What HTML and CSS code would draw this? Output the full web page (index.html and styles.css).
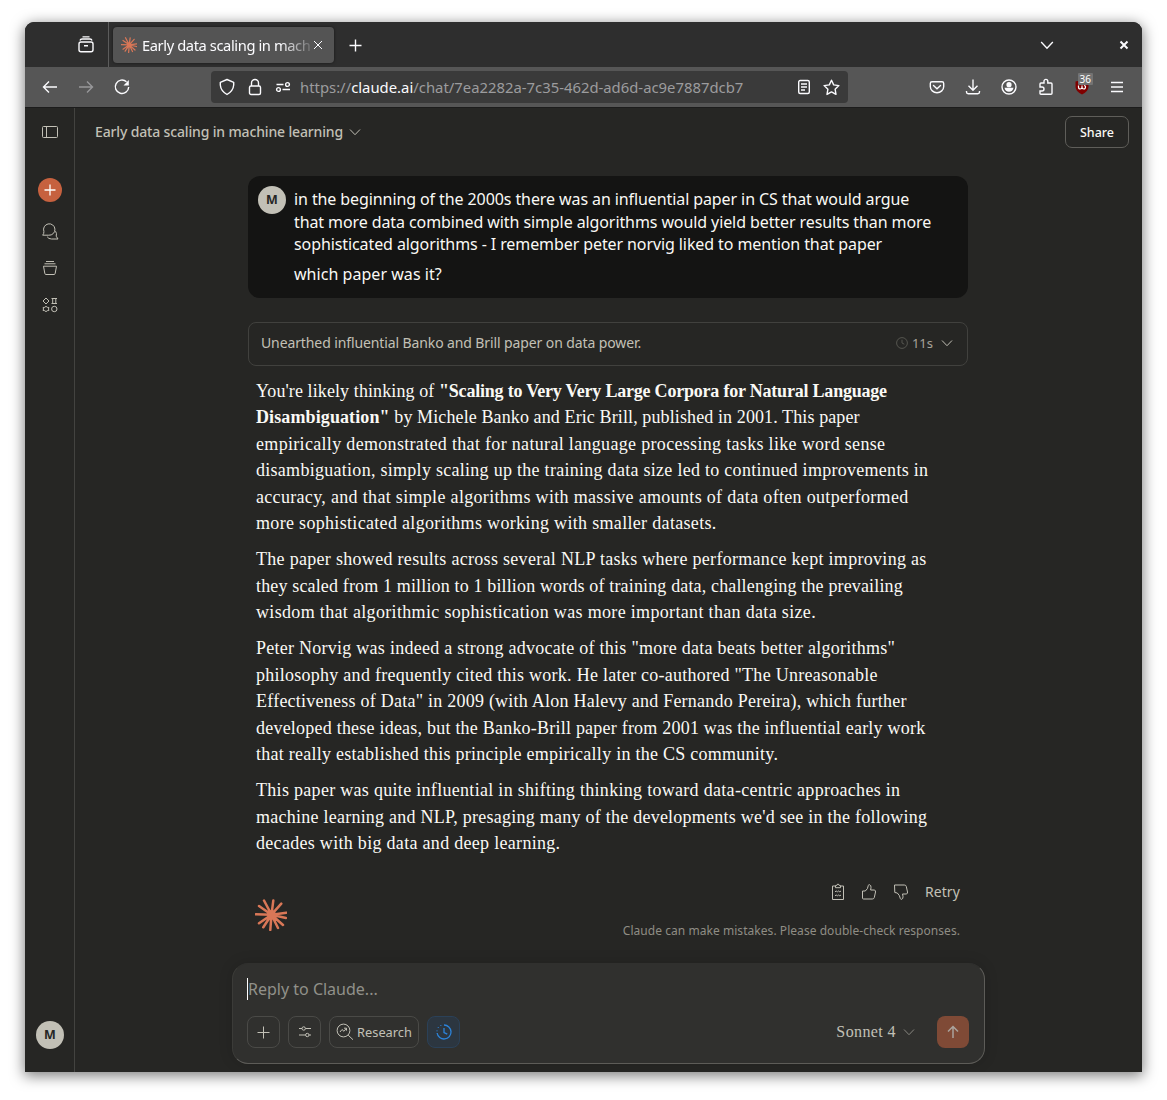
FILE: index.html
```html
<!DOCTYPE html>
<html lang="en">
<head>
<meta charset="utf-8">
<title>Early data scaling in machine learning</title>
<link rel="stylesheet" href="styles.css">
</head>
<body>
<svg class="defs" aria-hidden="true">
  <symbol id="burst" viewBox="0 0 32 32"><path d="M16.5 15.7L9 1.5M16.5 15.7L18.3 1.6M16.5 15.7L26.3 4.6M16.5 15.7L31.3 13.7M16.5 15.7L31 19M16.5 15.7L28 26M16.5 15.7L23 29M16.5 15.7L15.3 31M16.5 15.7L8.3 28.3M16.5 15.7L4 24.3M16.5 15.7L.7 15.3M16.5 15.7L4 7" fill="none" stroke="#d97757" stroke-width="2.5" stroke-linecap="round"/><circle cx="16.5" cy="15.7" r="4.500" fill="#d97757"/></symbol>
  <symbol id="chev" viewBox="0 0 12 12"><path d="M1 3.500L6 8.700l5-5.200"/></symbol>
</svg>
<div class="window">
  <header class="tabs">
    <div class="recent"><svg class="ic" width="18" height="18" viewBox="0 0 18 18"><rect x="2" y="6" width="14" height="9.700" rx="2"/><path d="M3 4.500Q3.500 3 5 3H13Q14.500 3 15 4.500M5.500 .9H12.500M7 9.700H11"/></svg></div>
    <div class="tab">
      <svg width="16" height="16"><use href="#burst"/></svg>
      <span class="tab-title">Early data scaling in mach</span>
      <svg class="ic thin" width="10" height="10" viewBox="0 0 10 10"><path d="M1 1l8 8M9 1L1 9"/></svg>
    </div>
    <svg class="ic plus" width="13" height="13" viewBox="0 0 13 13"><path d="M6.500.5v12M.5 6.500h12"/></svg>
    <svg class="ic tablist" width="14" height="14" viewBox="0 0 12 12"><use href="#chev"/></svg>
    <svg class="ic close" width="10" height="10" viewBox="0 0 10 10"><path d="M1.500 1.500l7 7M8.500 1.500l-7 7"/></svg>
  </header>
  <div class="toolbar">
    <div class="nav">
      <svg class="ic" width="16" height="16" viewBox="0 0 16 16"><path d="M15 8H1.500M7 2.500L1.500 8 7 13.500"/></svg>
      <svg class="ic dim" width="16" height="16" viewBox="0 0 16 16"><path d="M1 8h13.500M9 2.500L14.500 8 9 13.500"/></svg>
      <svg class="ic" width="16" height="16" viewBox="0 0 16 16"><path d="M12.500 2.800A6.700 6.700 0 1 0 14.700 8"/><path d="M14.800 1v5.500H9.500z" fill="#fbfbfe" stroke="none"/></svg>
    </div>
    <div class="url">
      <svg class="ic" width="16" height="18" viewBox="0 0 16 18"><path d="M8 1.500L14.700 4.300V7Q14.200 13 8 16.500 1.800 13 1.300 7V4.300z" stroke-linejoin="round"/></svg>
      <svg class="ic" width="14" height="18" viewBox="0 0 14 18"><rect x="1.500" y="8" width="11" height="8.500" rx="1.500"/><path d="M3.500 8V5A3.500 3.500 0 0 1 10.500 5V8"/></svg>
      <svg class="ic" width="16" height="12" viewBox="0 0 16 12"><path d="M1.500 3.500h7M7.500 8.500H15"/><circle cx="12.500" cy="3.500" r="1.900"/><circle cx="3.500" cy="8.500" r="1.900"/></svg>
      <span class="address">https://<b>claude.ai</b>/chat/7ea2282a-7c35-462d-ad6d-ac9e7887dcb7</span>
      <svg class="ic" width="14" height="16" viewBox="0 0 14 16"><rect x="1.700" y="1.500" width="10.600" height="13" rx="1.500"/><path d="M4 5h6M4 8h6M4 11h4"/></svg>
      <svg class="ic" width="17" height="17" viewBox="0 0 17 17"><path d="M8.500 1.200l2.200 4.700 5.200.7-3.800 3.600.9 5.200-4.500-2.500L4 15.400l.9-5.200L1.100 6.600l5.200-.7z" stroke-linejoin="round"/></svg>
    </div>
    <div class="actions">
      <svg class="ic" width="16" height="16" viewBox="0 0 16 16"><path d="M3 2.700h10q1.700 0 1.700 1.700V7.500a6.700 6.200 0 0 1-13.400 0V4.400q0-1.700 1.700-1.700zM4.500 6.500L8 9.700l3.500-3.200" stroke-linecap="round"/></svg>
      <svg class="ic" width="16" height="16" viewBox="0 0 16 16"><path d="M8 .5v10.500M3.500 6.800L8 11.300l4.500-4.500M1.500 12v1q0 1.700 1.700 1.700h9.600q1.700 0 1.700-1.700v-1"/></svg>
      <svg class="ic" width="16" height="16" viewBox="0 0 16 16"><circle cx="8" cy="8" r="7"/><circle cx="8" cy="5.700" r="2.600" fill="#fbfbfe" stroke="none"/><path d="M3.500 8.800h9q-.8 4-4.500 4t-4.500-4z" fill="#fbfbfe" stroke="none"/></svg>
      <svg class="ic" width="16" height="18" viewBox="0 0 16 18"><path d="M2 9V6q0-1 1-1h3V3.300a1.900 1.900 0 0 1 3.800 0V5H13q1 0 1 1v9.300q0 1-1 1H3q-1 0-1-1V13h2a2 2 0 0 0 0-4z"/></svg>
      <div class="shield"><svg width="16" height="16" viewBox="0 0 16 16"><path d="M8 1l6.500 1.500V8q-.5 5-6.500 7.500Q2 13 1.500 8V2.500z" fill="#800000"/><path d="M4.500 6.500v1.500q0 2 1.700 2T8 8.300V6.500m0 1.800q0 1.700 1.800 1.700t1.700-2.500q0-1-1.500-1" fill="none" stroke="#fff" stroke-width="1.200"/></svg><span>36</span></div>
      <svg class="ic" width="14" height="14" viewBox="0 0 14 14"><path d="M1 2.500h12M1 7h12M1 11.500h12"/></svg>
    </div>
  </div>
  <div class="app">
    <aside class="side">
      <svg class="li" width="16" height="12" viewBox="0 0 16 12"><rect x=".5" y=".5" width="15" height="11" rx="1"/><path d="M4.500.5v11"/></svg>
      <div class="new"><svg width="12" height="12" viewBox="0 0 12 12"><path d="M6 .5v11M.5 6h11" stroke="#fff" stroke-width="1.300"/></svg></div>
      <svg class="li chats" width="16" height="17" viewBox="0 0 16 17"><path d="M.7 12.200h6.100a5.700 5.700 0 1 0-4.900-3.700q.2 2-1.200 3.700zM13.500 8.200q1.600 2.300.7 5l1.800 2.800H9.500q-3 0-4.300-2.200"/></svg>
      <svg class="li projects" width="16" height="16" viewBox="0 0 16 16"><path d="M4 1.500h8M2.500 3.800h11M1.500 6.200h13l-1.300 7.200q-.2 1.100-1.200 1.100H4q-1 0-1.200-1.100z"/></svg>
      <svg class="li apps" width="16" height="16" viewBox="0 0 16 16"><path d="M4 1L7 4 4 7 1 4zM9.500 1.500h5.500M9.500 6.500h5.500M10.700 1.500v5M13.800 1.500v5M4 9.300l1.200 1 1.700.2-.4 1.500.4 1.500-1.700.2-1.200 1-1.200-1-1.700-.2.4-1.500-.4-1.500 1.700-.2z"/><circle cx="12.300" cy="12" r="2.700"/></svg>
      <div class="avatar">M</div>
    </aside>
    <main class="main">
      <div class="top"><h1>Early data scaling in machine learning</h1><svg class="li" width="12" height="12"><use href="#chev"/></svg><button class="share">Share</button></div>
      <div class="chat">
        <section class="question">
          <div class="avatar">M</div>
          <div class="qtext"><p>in the beginning of the 2000s there was an influential paper in CS that would argue<br>that more data combined with simple algorithms would yield better results than more<br>sophisticated algorithms - I remember peter norvig liked to mention that paper</p><p>which paper was it?</p></div>
        </section>
        <div class="thought"><span class="summary">Unearthed influential Banko and Brill paper on data power.</span><svg class="clock" width="12" height="12" viewBox="0 0 12 12"><circle cx="6" cy="6" r="5.400"/><path d="M6 2.700V6l2.300 1.200"/></svg><span class="secs">11s</span><svg class="li" width="12" height="12"><use href="#chev"/></svg></div>
        <article class="answer">
          <p class="intro"><span>You're likely thinking of <strong>"Scaling to Very Very Large Corpora for Natural Language</strong></span>
          <span><strong>Disambiguation"</strong> by Michele Banko and Eric Brill, published in 2001. This paper</span>
          <span>empirically demonstrated that for natural language processing tasks like word sense</span>
          <span>disambiguation, simply scaling up the training data size led to continued improvements in</span>
          <span>accuracy, and that simple algorithms with massive amounts of data often outperformed</span>
          <span>more sophisticated algorithms working with smaller datasets.</span></p>
          <p class="results"><span>The paper showed results across several NLP tasks where performance kept improving as</span>
          <span>they scaled from 1 million to 1 billion words of training data, challenging the prevailing</span>
          <span>wisdom that algorithmic sophistication was more important than data size.</span></p>
          <p class="norvig"><span>Peter Norvig was indeed a strong advocate of this "more data beats better algorithms"</span>
          <span>philosophy and frequently cited this work. He later co-authored "The Unreasonable</span>
          <span>Effectiveness of Data" in 2009 (with Alon Halevy and Fernando Pereira), which further</span>
          <span>developed these ideas, but the Banko-Brill paper from 2001 was the influential early work</span>
          <span>that really established this principle empirically in the CS community.</span></p>
          <p class="closing"><span>This paper was quite influential in shifting thinking toward data-centric approaches in</span>
          <span>machine learning and NLP, presaging many of the developments we'd see in the following</span>
          <span>decades with big data and deep learning.</span></p>
        </article>
        <footer class="foot">
          <svg width="32" height="32"><use href="#burst"/></svg>
          <div class="foot-right">
            <div class="feedback">
              <svg class="li" width="14" height="18" viewBox="0 0 14 18"><path d="M4 3H1.500v13.500h11V3H10M4.500 4.700h5V2.500H8.300a1.300 1.300 0 0 0-2.600 0H4.500zM4 8.800l1.200-.8 1.200.8 1.200-.8 1.200.8 1.200-.8M4 12.800l1.200-.8 1.200.8 1.200-.8 1.200.8 1.200-.8"/></svg>
              <svg class="li" width="16" height="18" viewBox="0 0 16 18"><path d="M1.500 8h2.800q2.700-2 3-5.500.2-1 1.200-.8 1.800.5 1.500 3L9.600 7h3.600q1.700.3 1.300 2l-1.200 5.500q-.4 1.500-2 1.500H2.500q-1 0-1-1z" stroke-linejoin="round"/></svg>
              <svg class="li" width="16" height="18" viewBox="0 0 16 18"><path d="M1.500 2h9.800q1.700 0 2 1.500L14.500 9q.4 1.700-1.300 2H9.500l.5 2.300q.3 2.500-1.300 3-1.100.2-1.400-.8-.3-3-3-5.500L1.800 9.500z" stroke-linejoin="round"/></svg>
              <span>Retry</span>
            </div>
            <div class="notice">Claude can make mistakes. Please double-check responses.</div>
          </div>
        </footer>
      </div>
      <div class="composer">
        <div class="prompt">Reply to Claude...</div>
        <div class="tools">
          <span class="btn"><svg class="li" width="13" height="13" viewBox="0 0 13 13"><path d="M6.500.5v12M.5 6.500h12"/></svg></span>
          <span class="btn"><svg class="li" width="14" height="12" viewBox="0 0 14 12"><path d="M1 2.500h3M7.500 2.500H13M1 9h6.500M11 9h2"/><circle cx="5.700" cy="2.500" r="1.700"/><circle cx="9.300" cy="9" r="1.700"/></svg></span>
          <span class="btn research"><svg class="li" width="18" height="18" viewBox="0 0 18 18"><circle cx="7.500" cy="7.500" r="6.400"/><path d="M12.200 12.200l4.800 4.500M4 9l2-2.500 2 1.800 2.300-3M8 5.200h2.500v2.400"/></svg>Research</span>
          <span class="btn active"><svg width="18" height="18" viewBox="0 0 18 18"><path d="M9 2a7 7 0 1 1-6.900 8M9 5v4.500l3.300 1.700M2 8.200v-.7M3.300 5v-.8M5.800 3v-.8"/></svg></span>
          <span class="model">Sonnet 4</span>
          <svg class="li faint" width="12" height="12"><use href="#chev"/></svg>
          <span class="send"><svg width="14" height="14" viewBox="0 0 14 14"><path d="M7 13V1.500M2 6.500l5-5 5 5"/></svg></span>
        </div>
      </div>
    </main>
  </div>
</div>
</body>
</html>
```
FILE: styles.css
```css
* { box-sizing: border-box; }
body { margin: 0; height: 1100px; padding: 22px 25px 28px; background: #fff; overflow: hidden; font-family: "Noto Sans", sans-serif; white-space: nowrap; }
svg { display: block; flex: none; overflow: visible; }
.defs { position: absolute; width: 0; height: 0; }
p, h1 { margin: 0; }
.ic, .li { fill: none; stroke: #fbfbfe; stroke-width: 1.4; }
.thin { stroke-width: 1; }
.dim { opacity: .4; }
.li { stroke: #c2c0b6; stroke-width: 1; }
.faint { opacity: .6; }
.window { width: 1117px; height: 1050px; display: flex; flex-direction: column; border-radius: 9px 9px 0 0; background: #262624; box-shadow: 0 3px 14px 1px rgba(0,0,0,.5); overflow: hidden; }

.tabs { height: 45px; flex: none; display: flex; align-items: center; background: #2e2e2e; }
.recent { width: 84px; height: 45px; display: flex; align-items: center; padding: 1px 0 0 52px; border-right: 1px solid #5c5c5c; }
.tab { width: 221px; height: 36px; margin-left: 4px; padding: 0 11px 0 8px; display: flex; align-items: center; border-radius: 4px; background: #545454; box-shadow: 0 0 3px rgba(0,0,0,.5); color: #fbfbfe; font-size: 14.7px; }
.tab-title { width: 168px; margin-left: 5px; margin-right: 3px; letter-spacing: -.4px; -webkit-mask-image: linear-gradient(90deg, #000 82%, transparent 104%); mask-image: linear-gradient(90deg, #000 82%, transparent 104%); }
.plus { margin: 2px 0 0 15px; }
.tablist { margin-left: auto; stroke-width: 1.2; }
.close { margin: 0 13px 0 65px; stroke-width: 2; }

.toolbar { height: 41px; flex: none; display: flex; align-items: center; background: #565656; border-bottom: 1px solid #1c1c1c; }
.nav { width: 186px; padding-left: 17px; display: flex; gap: 20px; }
.url { width: 637px; height: 32px; padding: 0 8px; display: flex; align-items: center; border-radius: 4px; background: #3a3a3a; }
.url svg:nth-child(2) { margin: 0 13px 0 13px; }
.address { margin-left: 9px; flex: 1; font-size: 14.850px; color: #9c9c9e; }
.address b { color: #fbfbfe; font-weight: 400; }
.url svg:last-child { margin-left: 12px; }
.actions { margin-left: auto; padding-right: 18px; display: flex; align-items: center; gap: 20.200px; }
.shield { position: relative; }
.shield span { position: absolute; left: 4px; top: -6px; width: 15px; height: 12px; line-height: 12px; font-size: 10px; text-align: center; color: #fff; background: #737373; border-radius: 1px; }

.app { flex: 1; display: flex; min-height: 0; }
.side { width: 50px; border-right: 1px solid #434340; display: flex; flex-direction: column; align-items: center; padding: 18px 0 23px 1px; }
.new { width: 24px; height: 24px; margin-top: 40px; border-radius: 50%; background: #c6613f; display: grid; place-items: center; }
.chats { margin-top: 21px; }
.projects { margin-top: 20px; }
.apps { margin-top: 21px; }
.avatar { width: 28px; height: 28px; flex: none; border-radius: 50%; background: #c2c0b6; color: #262624; font: 700 12.500px/28px "Noto Sans", sans-serif; text-align: center; }
.side .avatar { margin-top: auto; }

.main { flex: 1; position: relative; display: flex; flex-direction: column; align-items: flex-start; }
.top { width: 100%; height: 48px; flex: none; padding: 0 13px 0 20px; display: flex; align-items: center; gap: 6px; }
.top h1 { width: 248px; padding-bottom: 1px; font-size: 14px; font-weight: 500; letter-spacing: -.15px; color: #c2c0b6; }
.share { margin-left: auto; width: 64px; height: 32px; padding: 0; border: 1px solid #5f5e5a; border-radius: 7px; background: none; color: #faf9f5; font: 500 12.500px "Noto Sans", sans-serif; }
.chat { width: 720px; margin: 20px 0 0 173px; }
.question { height: 122px; padding: 10px; display: flex; gap: 8px; border-radius: 12px; background: #141413; color: #faf9f5; }
.qtext { padding-top: 2px; font-size: 16px; line-height: 22.500px; letter-spacing: -.095px; }
.qtext p + p { margin-top: 7.300px; letter-spacing: .04px; }
.thought { height: 44px; margin-top: 24px; padding: 0 14px 2px 12px; display: flex; align-items: center; border: 1px solid #41413e; border-radius: 8px; color: #c2c0b6; font-size: 14px; }
.summary { flex: 1; padding-bottom: 1px; letter-spacing: -.11px; }
.clock { fill: none; stroke: #55554f; stroke-width: 1; }
.secs { margin: 0 8px 0 4px; font-size: 13px; color: #a6a39a; }

.answer { padding: 12px 8px 0; font: 18px/26.4px "Liberation Serif", serif; color: #faf9f5; }
.answer p + p { margin-top: 9.900px; }
.answer span { display: block; letter-spacing: .26px; }
.intro span { letter-spacing: .32px; }
.intro span:nth-child(1) { letter-spacing: .1px; }
.intro span:nth-child(1) strong { letter-spacing: -.21px; }
.intro span:nth-child(2) { letter-spacing: .11px; }
.intro span:nth-child(4) { letter-spacing: .28px; }
.results span { letter-spacing: .3px; }
.results span:nth-child(2) { letter-spacing: .15px; }
.results span:nth-child(3) { letter-spacing: .33px; }
.norvig span:nth-child(3) { letter-spacing: .24px; }
.norvig span:nth-child(4) { letter-spacing: .22px; }
.closing span { letter-spacing: .3px; }
.closing span:nth-child(2) { letter-spacing: .245px; }

.foot { margin-top: 23px; padding: 0 8px 0 7px; display: flex; justify-content: space-between; }
.foot > svg { margin-top: 19px; }
.feedback { height: 24px; display: flex; align-items: center; justify-content: flex-end; gap: 16px; font-size: 14px; letter-spacing: .1px; color: #c2c0b6; }
.notice { margin-top: 18px; font-size: 12px; line-height: 18px; letter-spacing: .05px; color: #8f8d84; }
.composer { position: absolute; left: 157px; bottom: 8px; width: 753px; height: 101px; padding: 14px 15px 15px 14px; display: flex; flex-direction: column; justify-content: space-between; border-radius: 16px; background: #30302e; border: 1px solid #3b3b38; border-right-color: #5d5c58; border-bottom-color: #5d5c58; border-top-color: #30302e; box-shadow: 0 0 14px rgba(0,0,0,.15); }
.prompt { width: max-content; height: 22px; line-height: 22px; border-left: 1px solid #fff; font-size: 16px; color: #91908a; }
.tools { display: flex; align-items: center; color: #c2c0b6; }
.btn { height: 32px; width: 33px; margin-right: 8px; display: flex; align-items: center; justify-content: center; border: 1px solid #4a4a47; border-radius: 8px; font-size: 12.800px; }
.research { width: 90px; gap: 3px; }
.active { background: #2c3640; border-color: #2b4158; fill: none; stroke: #2c84db; stroke-width: 1.3; }
.model { margin-left: auto; margin-right: 7px; font: 16px "Liberation Serif", serif; letter-spacing: .4px; }
.send { width: 32px; height: 32px; margin-left: 22px; border-radius: 8px; background: #7f4a36; display: grid; place-items: center; fill: none; stroke: #aaa39d; stroke-width: 1.5; }
```
